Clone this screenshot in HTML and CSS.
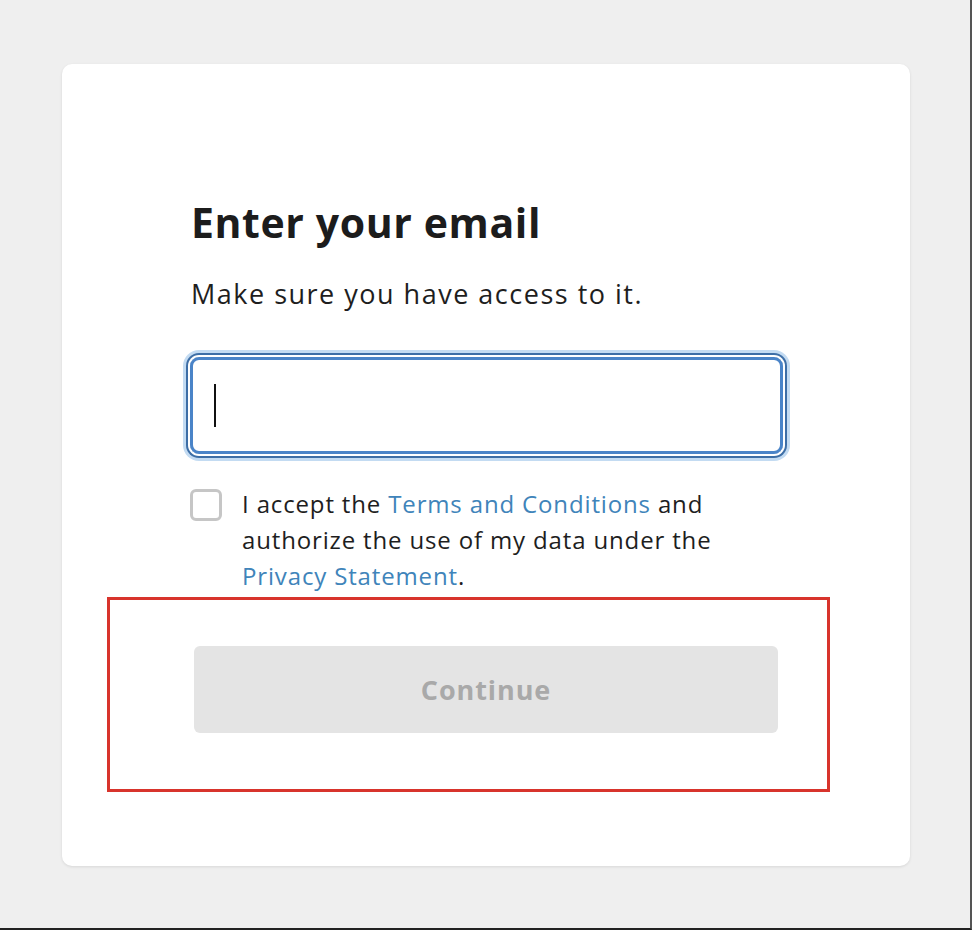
FILE: index.html
```html
<!DOCTYPE html>
<html lang="en">
<head>
<meta charset="utf-8">
<title>Enter your email</title>
<link rel="stylesheet" href="styles.css">
</head>
<body>
<div class="page">
  <main class="card">
    <h1 class="title">Enter your email</h1>
    <p class="subtitle">Make sure you have access to it.</p>
    <div class="field"><span class="caret"></span></div>
    <label class="consent">
      <span class="box"></span>
      <span class="consent-text">I accept the <a href="#" class="link">Terms and Conditions</a> and authorize the use of my data under the <a href="#" class="link">Privacy Statement</a>.</span>
    </label>
    <button class="continue" type="button" disabled>Continue</button>
    <div class="highlight"></div>
  </main>
</div>
</body>
</html>
```

FILE: styles.css
```css
html, body {
  margin: 0;
  padding: 0;
}
body {
  background: #efefef;
  font-family: "Open Sans", "Noto Sans", sans-serif;
  color: #1e1e1e;
}
.page {
  width: 972px;
  height: 930px;
  box-sizing: border-box;
  border-right: 2px solid #555;
  border-bottom: 2px solid #222;
  padding: 64px 0 0 62px;
}
.card {
  position: relative;
  width: 848px;
  height: 802px;
  background: #fff;
  border-radius: 10px;
  box-shadow: 0 1px 3px rgba(0,0,0,0.10);
  box-sizing: border-box;
  padding: 133px 0 0 129px;
  display: flex;
  flex-direction: column;
  align-items: flex-start;
}
.title {
  margin: 0;
  font-size: 41px;
  line-height: 50px;
  font-weight: 700;
  letter-spacing: 0.6px;
  color: #1c1c1c;
}
.subtitle {
  margin: 31px 0 0;
  font-size: 27px;
  line-height: 32px;
  letter-spacing: 1.5px;
  color: #1e1e1e;
}
.field {
  margin: 47px 0 0 -1px;
  width: 593px;
  height: 97px;
  box-sizing: border-box;
  border: 3px solid #4a84c8;
  border-radius: 9px;
  box-shadow: 0 0 0 2px #fff, 0 0 0 4px #3d6ea6, 0 0 0 7px #c3dbf2;
  display: flex;
  align-items: center;
  padding-left: 21px;
}
.caret {
  width: 2px;
  height: 43px;
  background: #111;
}
.consent {
  margin-top: 32px;
  display: flex;
  gap: 20px;
  align-items: flex-start;
  width: 545px;
}
.box {
  flex: none;
  width: 32px;
  height: 32px;
  margin: 3px 0 0 -1px;
  box-sizing: border-box;
  border: 3px solid #c6c6c6;
  border-radius: 6px;
}
.consent-text {
  font-size: 24px;
  line-height: 36px;
  letter-spacing: 0.85px;
  color: #1e1e1e;
}
.link {
  color: #4084ba;
  text-decoration: none;
}
.continue {
  margin: 52px 0 0 3px;
  width: 584px;
  height: 87px;
  border: 0;
  border-radius: 6px;
  background: #e4e4e4;
  color: #a9a9a9;
  font-family: "Open Sans", "Noto Sans", sans-serif;
  font-size: 27px;
  font-weight: 700;
  letter-spacing: 0.9px;
}
.highlight {
  position: absolute;
  left: 45px;
  top: 533px;
  width: 723px;
  height: 195px;
  box-sizing: border-box;
  border: 3px solid #d8342c;
}
```
